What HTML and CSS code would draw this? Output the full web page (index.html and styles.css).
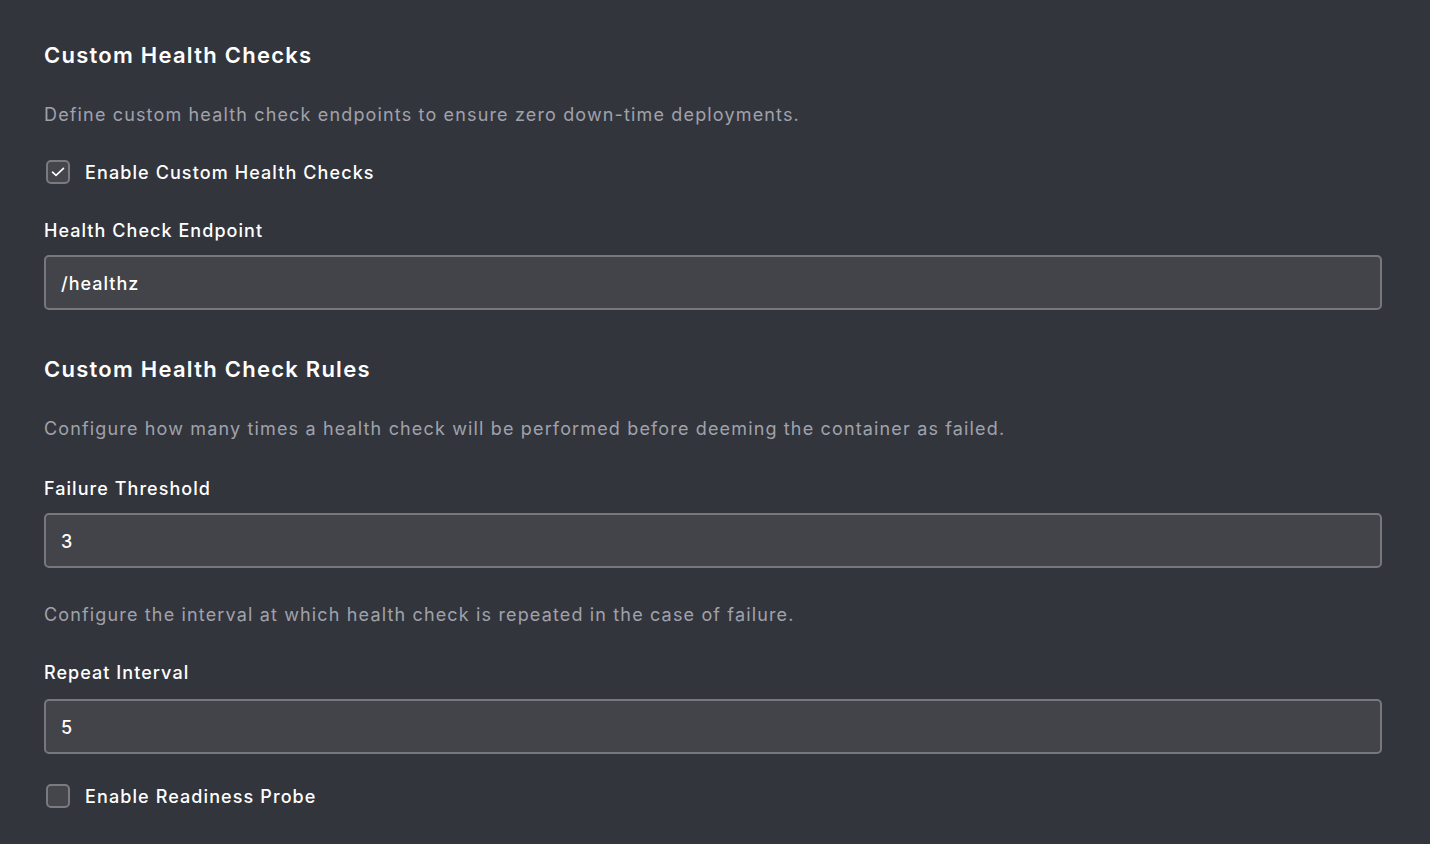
FILE: index.html
```html
<!DOCTYPE html>
<html lang="en">
<head>
<meta charset="utf-8">
<title>Custom Health Checks</title>
<link rel="stylesheet" href="styles.css">
</head>
<body>
<main class="panel">
  <h2 class="title t1">Custom Health Checks</h2>
  <p class="desc d1">Define custom health check endpoints to ensure zero down-time deployments.</p>
  <label class="check c1">
    <span class="box checked"><svg viewBox="0 0 14 10" width="14" height="10"><path d="M1.5 5.2 L5 8.4 L12.5 1.4" fill="none" stroke="#ffffff" stroke-width="1.6" stroke-linecap="round" stroke-linejoin="round"/></svg></span>
    <span class="check-text">Enable Custom Health Checks</span>
  </label>
  <div class="label l1">Health Check Endpoint</div>
  <div class="input i1">/healthz</div>

  <h2 class="title t2">Custom Health Check Rules</h2>
  <p class="desc d2">Configure how many times a health check will be performed before deeming the container as failed.</p>
  <div class="label l2">Failure Threshold</div>
  <div class="input i2">3</div>
  <p class="desc d3">Configure the interval at which health check is repeated in the case of failure.</p>
  <div class="label l3">Repeat Interval</div>
  <div class="input i3">5</div>
  <label class="check c2">
    <span class="box"></span>
    <span class="check-text">Enable Readiness Probe</span>
  </label>
</main>
</body>
</html>
```

FILE: styles.css
```css
html, body {
  margin: 0;
  padding: 0;
  background: #33353d;
}
body {
  font-family: Inter, "Open Sans", "Liberation Sans", sans-serif;
  color: #ffffff;
}
.panel {
  padding: 40px 48px 0 44px;
  display: flex;
  flex-direction: column;
}
.title {
  margin: 0;
  font-size: 22px;
  font-weight: 600;
  line-height: 30px;
  letter-spacing: 1.25px;
  color: #ffffff;
}
.desc {
  margin: 0;
  font-size: 18px;
  line-height: 24px;
  letter-spacing: 1.15px;
  color: #a0a2ab;
}
.label {
  font-size: 18px;
  line-height: 24px;
  font-weight: 500;
  letter-spacing: 1.05px;
  color: #ffffff;
}
.check {
  display: flex;
  align-items: center;
  gap: 15px;
  height: 24px;
  padding-left: 2px;
  font-size: 18px;
  font-weight: 500;
  letter-spacing: 1.1px;
}
.box {
  width: 20px;
  height: 20px;
  border: 2px solid #7a7b80;
  border-radius: 5px;
  background: #45464c;
  display: flex;
  align-items: center;
  justify-content: center;
  box-sizing: content-box;
}
.input {
  height: 49px;
  border: 2px solid #77787d;
  border-radius: 5px;
  background: #434449;
  padding: 2px 15px 0;
  font-size: 18px;
  font-weight: 500;
  line-height: 50px;
  letter-spacing: 1px;
  color: #ffffff;
}
.d1 { margin-top: 33px; }
.c1 { margin-top: 33px; }
.l1 { margin-top: 35px; }
.i1 { margin-top: 12px; }
.t2 { margin-top: 44px; }
.d2 { margin-top: 33px; }
.l2 { margin-top: 36px; }
.i2 { margin-top: 12px; }
.d3 { margin-top: 35px; }
.l3 { margin-top: 34px; }
.i3 { margin-top: 14px; }
.c2 { margin-top: 30px; }
```
